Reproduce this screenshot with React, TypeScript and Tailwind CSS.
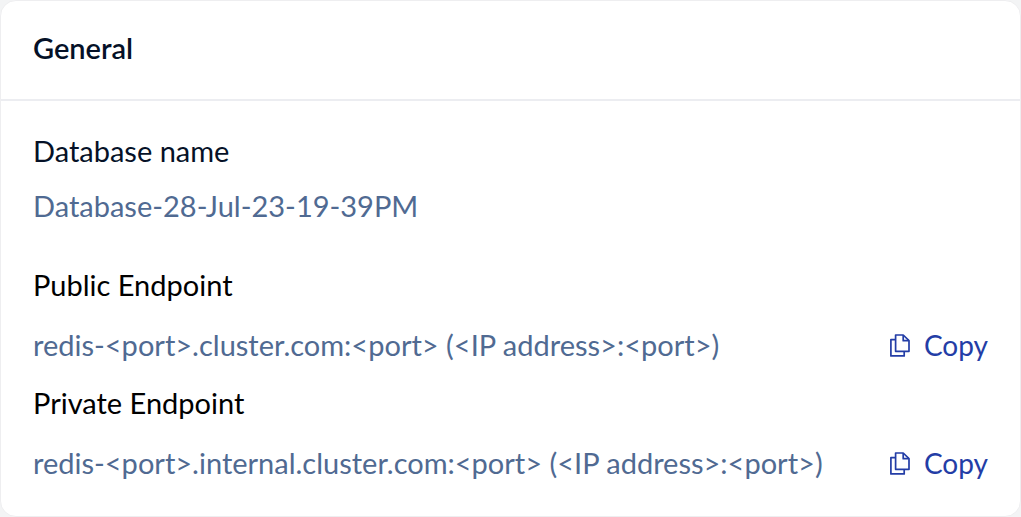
type Endpoint = { label: string; host: string; address: string };

const endpoints: Endpoint[] = [
  { label: "Public Endpoint", host: "redis-<port>.cluster.com:<port>", address: "(<IP address>:<port>)" },
  { label: "Private Endpoint", host: "redis-<port>.internal.cluster.com:<port>", address: "(<IP address>:<port>)" },
];

function CopyIcon() {
  return (
    <svg
      className="h-6 w-5 shrink-0"
      viewBox="0 0 20 24"
      fill="none"
      stroke="currentColor"
      strokeWidth="1.7"
      strokeLinejoin="round"
      aria-hidden="true"
    >
      <path d="M5.6 2H13.2L19 7.7V18.3H5.6Z" />
      <path d="M13.2 2V7.7H19" />
      <path d="M5.6 6.6H0.9V22.9H14.2V18.3" />
    </svg>
  );
}

function CopyButton({ label, value }: { label: string; value: string }) {
  return (
    <button
      type="button"
      aria-label={`Copy ${label}`}
      onClick={() => navigator.clipboard?.writeText(value)}
      className="flex shrink-0 cursor-pointer items-center gap-[14px] text-[28px] leading-9 text-[#233da6]"
    >
      <CopyIcon />
      Copy
    </button>
  );
}

export default function App() {
  return (
    <main className="bg-[#f3f4f5] font-['Lato',sans-serif] text-[29px] leading-9">
      <section className="rounded-2xl border border-[#eeeef0] bg-white pb-[35px]">
        <header className="border-b-2 border-[#ecedf1] px-8 pt-[29px] pb-[33px]">
          <h2 className="font-semibold text-[#051127]">General</h2>
        </header>
        <dl className="px-8 pt-8">
          <dt className="text-[#051127]">Database name</dt>
          <dd className="mt-[19px] mb-[43px] text-[#506a92]">Database-28-Jul-23-19-39PM</dd>
          {endpoints.map((e) => (
            <div key={e.label} className="mb-[22px] last:mb-0">
              <dt className="text-black">{e.label}</dt>
              <dd className="mt-6 flex items-center justify-between gap-4 text-[#506a92]">
                <span>
                  {e.host} {e.address}
                </span>
                <CopyButton label={e.label} value={e.host} />
              </dd>
            </div>
          ))}
        </dl>
      </section>
    </main>
  );
}
